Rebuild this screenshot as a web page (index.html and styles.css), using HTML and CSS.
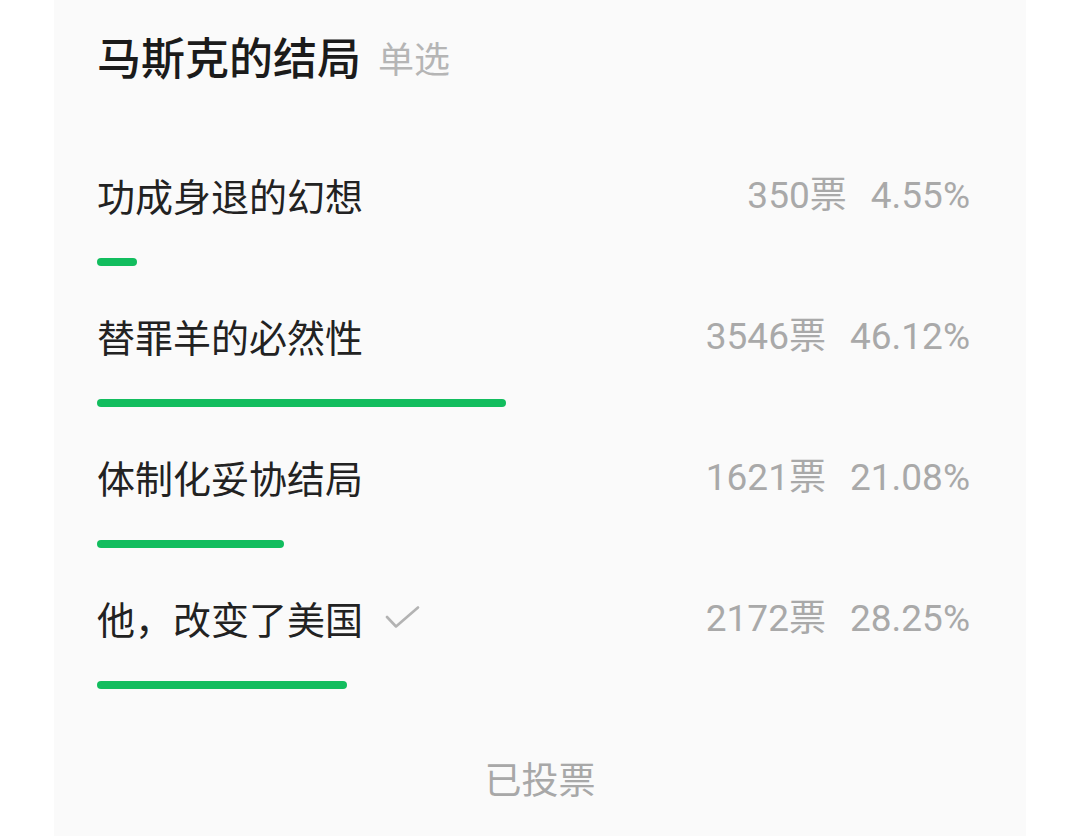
FILE: index.html
```html
<!DOCTYPE html>
<html lang="zh-CN">
<head>
  <meta charset="UTF-8" />
  <meta name="viewport" content="width=device-width, initial-scale=1.0"/>
  <title>投票</title>
  <link rel="stylesheet" href="styles.css">
</head>
<body>
  <div class="card">
    <div class="poll-title">
      <h1>马斯克的结局</h1>
      <span class="poll-type">单选</span>
    </div>

    <ul class="options">
      <li class="option">
        <div class="option-head">
          <span class="option-name">功成身退的幻想</span>
          <span class="stats"><span>350票</span><span>4.55%</span></span>
        </div>
        <div class="track"><div class="bar" style="width: 4.55%"></div></div>
      </li>
      <li class="option">
        <div class="option-head">
          <span class="option-name">替罪羊的必然性</span>
          <span class="stats"><span>3546票</span><span>46.12%</span></span>
        </div>
        <div class="track"><div class="bar" style="width: 46.12%"></div></div>
      </li>
      <li class="option">
        <div class="option-head">
          <span class="option-name">体制化妥协结局</span>
          <span class="stats"><span>1621票</span><span>21.08%</span></span>
        </div>
        <div class="track"><div class="bar" style="width: 21.08%"></div></div>
      </li>
      <li class="option">
        <div class="option-head">
          <span class="option-name">他，改变了美国
            <svg class="check" width="36" height="26" viewBox="0 0 36 26">
              <path d="M2 11 L11 20.5 L33 1.5" fill="none" stroke="#b3b3b3" stroke-width="2.6" stroke-linecap="round" stroke-linejoin="round"/>
            </svg>
          </span>
          <span class="stats"><span>2172票</span><span>28.25%</span></span>
        </div>
        <div class="track"><div class="bar" style="width: 28.25%"></div></div>
      </li>
    </ul>

    <div class="voted">已投票</div>
  </div>
</body>
</html>
```

FILE: styles.css
```css
body {
  margin: 0;
  background: #ffffff;
  font-family: "Noto Sans CJK SC", sans-serif;
}
.card {
  margin: 0 54px;
  min-height: 836px;
  box-sizing: border-box;
  background: #fafafa;
  padding: 28px 56px 0 43px;
}
.poll-title {
  display: flex;
  align-items: center;
  height: 56px;
}
h1 {
  margin: 0;
  font-size: 44px;
  font-weight: 500;
  color: #1b1b1b;
  line-height: 56px;
}
.poll-type {
  margin-left: 17px;
  margin-top: 2px;
  font-size: 36px;
  color: #b5b5b5;
  line-height: 56px;
}
.options {
  list-style: none;
  margin: 86px 0 0;
  padding: 0;
}
.option {
  margin-bottom: 45px;
}
.option-head {
  display: flex;
  justify-content: space-between;
  align-items: center;
  height: 50px;
}
.option-name {
  display: flex;
  align-items: center;
  font-size: 38px;
  color: #222222;
  line-height: 50px;
}
.check {
  margin-left: 22px;
  margin-top: 2px;
}
.stats {
  display: flex;
  gap: 24px;
  margin-top: 2px;
  font-family: Roboto, "Noto Sans CJK SC", sans-serif;
  font-size: 37px;
  color: #a9a9a9;
  line-height: 50px;
}
.track {
  margin-top: 38px;
  width: calc(100% + 13px);
  height: 8px;
}
.bar {
  height: 8px;
  background: #12bd5e;
  border-radius: 4px;
}
.voted {
  margin: 64px -13px 0 0;
  text-align: center;
  font-size: 37px;
  color: #a8a8a8;
  line-height: 50px;
}
```
